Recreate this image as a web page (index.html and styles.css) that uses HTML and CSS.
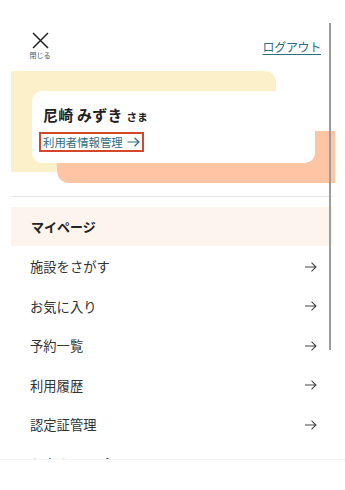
FILE: index.html
```html
<!DOCTYPE html>
<html lang="ja">
<head>
<meta charset="utf-8">
<link rel="stylesheet" href="styles.css">
</head>
<body>
<div class="page">
  <div class="scroll">
    <header class="top">
      <button class="close">
        <svg class="close-x" width="17" height="17" viewBox="0 0 17 17"><path d="M1 1 L16 16 M16 1 L1 16" stroke="#222" stroke-width="1.5" fill="none"/></svg>
        <span class="close-label">閉じる</span>
      </button>
      <a class="logout">ログアウト</a>
    </header>

    <section class="profile">
      <div class="deco-yellow"></div>
      <div class="deco-salmon"></div>
      <div class="card">
        <div class="name">尼崎 みずき<span class="sama">さま</span></div>
        <a class="info-link">利用者情報管理
          <svg width="13" height="10" viewBox="0 0 13 10"><path d="M0.5 5 H12 M7.5 0.7 L12 5 L7.5 9.3" stroke="#2e6e7e" stroke-width="1.2" fill="none"/></svg>
        </a>
      </div>
    </section>

    <hr class="divider">

    <nav class="menu">
      <div class="menu-head">マイページ</div>
      <a class="item"><span>施設をさがす</span><svg class="arr" width="12" height="10" viewBox="0 0 12 10"><path d="M0 5 H11 M6.5 0.7 L11 5 L6.5 9.3" stroke="#444" stroke-width="1.1" fill="none"/></svg></a>
      <a class="item"><span>お気に入り</span><svg class="arr" width="12" height="10" viewBox="0 0 12 10"><path d="M0 5 H11 M6.5 0.7 L11 5 L6.5 9.3" stroke="#444" stroke-width="1.1" fill="none"/></svg></a>
      <a class="item"><span>予約一覧</span><svg class="arr" width="12" height="10" viewBox="0 0 12 10"><path d="M0 5 H11 M6.5 0.7 L11 5 L6.5 9.3" stroke="#444" stroke-width="1.1" fill="none"/></svg></a>
      <a class="item"><span>利用履歴</span><svg class="arr" width="12" height="10" viewBox="0 0 12 10"><path d="M0 5 H11 M6.5 0.7 L11 5 L6.5 9.3" stroke="#444" stroke-width="1.1" fill="none"/></svg></a>
      <a class="item"><span>認定証管理</span><svg class="arr" width="12" height="10" viewBox="0 0 12 10"><path d="M0 5 H11 M6.5 0.7 L11 5 L6.5 9.3" stroke="#444" stroke-width="1.1" fill="none"/></svg></a>
      <a class="item"><span>お客さまサポート</span><svg class="arr" width="12" height="10" viewBox="0 0 12 10"><path d="M0 5 H11 M6.5 0.7 L11 5 L6.5 9.3" stroke="#444" stroke-width="1.1" fill="none"/></svg></a>
    </nav>
  </div>
  <div class="footer"></div>
  <div class="scrollbar"></div>
</div>
</body>
</html>
```

FILE: styles.css
```css
* { box-sizing: border-box; }
html, body { margin: 0; padding: 0; background: #fff; }
body {
  font-family: "Noto Sans CJK JP", "Noto Sans", sans-serif;
  color: #333;
}
.page {
  position: relative;
  width: 345px;
  height: 490px;
  overflow: hidden;
  display: flex;
  flex-direction: column;
}
.scroll {
  height: 459px;
  overflow: hidden;
  flex: none;
}
.footer {
  flex: 1;
  background: #fff;
  border-top: 1px solid #f3f3f3;
}
.scrollbar {
  position: absolute;
  left: 329px;
  top: 23px;
  width: 2px;
  height: 327px;
  background: #9c9c9c;
}
.top {
  height: 71px;
  display: flex;
  justify-content: space-between;
  align-items: flex-start;
  padding: 0 24px 0 29px;
}
.close {
  margin-top: 32px;
  padding: 0;
  border: 0;
  background: none;
  display: flex;
  flex-direction: column;
  align-items: center;
  width: 22px;
}
.close-x { display: block; }
.close-label {
  font-size: 7px;
  line-height: 8px;
  margin-top: 2px;
  color: #555;
  font-family: "Noto Sans CJK JP", sans-serif;
  white-space: nowrap;
}
.logout {
  margin-top: 38px;
  font-size: 12px;
  line-height: 17px;
  color: #2e6e7e;
  text-decoration: underline;
  text-underline-offset: 2px;
  letter-spacing: -0.3px;
}
.profile {
  display: grid;
  grid-template-columns: 1fr;
  grid-template-rows: 112px;
}
.deco-yellow, .deco-salmon, .card { grid-area: 1 / 1; }
.deco-yellow {
  margin-left: 11px;
  width: 265px;
  height: 101px;
  background: #fbf0ca;
  border-radius: 0 11px 0 0;
}
.deco-salmon {
  margin-left: 57px;
  margin-top: 60px;
  width: 278px;
  height: 52px;
  background: #fdc5a3;
  border-radius: 0 0 0 12px;
}
.card {
  margin-left: 32px;
  margin-top: 20px;
  width: 283px;
  height: 72px;
  background: #fff;
  border-radius: 10px;
  padding: 13px 0 0 11px;
}
.name {
  font-size: 15px;
  font-weight: bold;
  line-height: 22px;
  color: #222;
  letter-spacing: 0.2px;
}
.sama {
  font-size: 10.5px;
  font-weight: bold;
  margin-left: 4px;
}
.info-link {
  margin-top: 3px;
  margin-left: -4px;
  display: inline-flex;
  align-items: center;
  gap: 4px;
  border: 2px solid #d4472b;
  padding: 0 2px 0 2px;
  height: 20px;
  font-size: 11.4px;
  color: #2e6e7e;
}
.divider {
  margin: 13px 12px 0 11px;
  border: 0;
  border-top: 1px solid #e6e6e6;
  height: 0;
}
.menu {
  margin: 10px 12px 0 11px;
  display: flex;
  flex-direction: column;
}
.menu-head {
  height: 39px;
  background: #fcf4ed;
  display: flex;
  align-items: center;
  padding-left: 20px;
  font-size: 13px;
  font-weight: bold;
  color: #222;
}
.item {
  height: 39.5px;
  flex: none;
  display: flex;
  align-items: center;
  justify-content: space-between;
  padding: 2px 16px 0 19px;
  font-size: 13.3px;
  color: #333;
}
.arr { display: block; }
```
